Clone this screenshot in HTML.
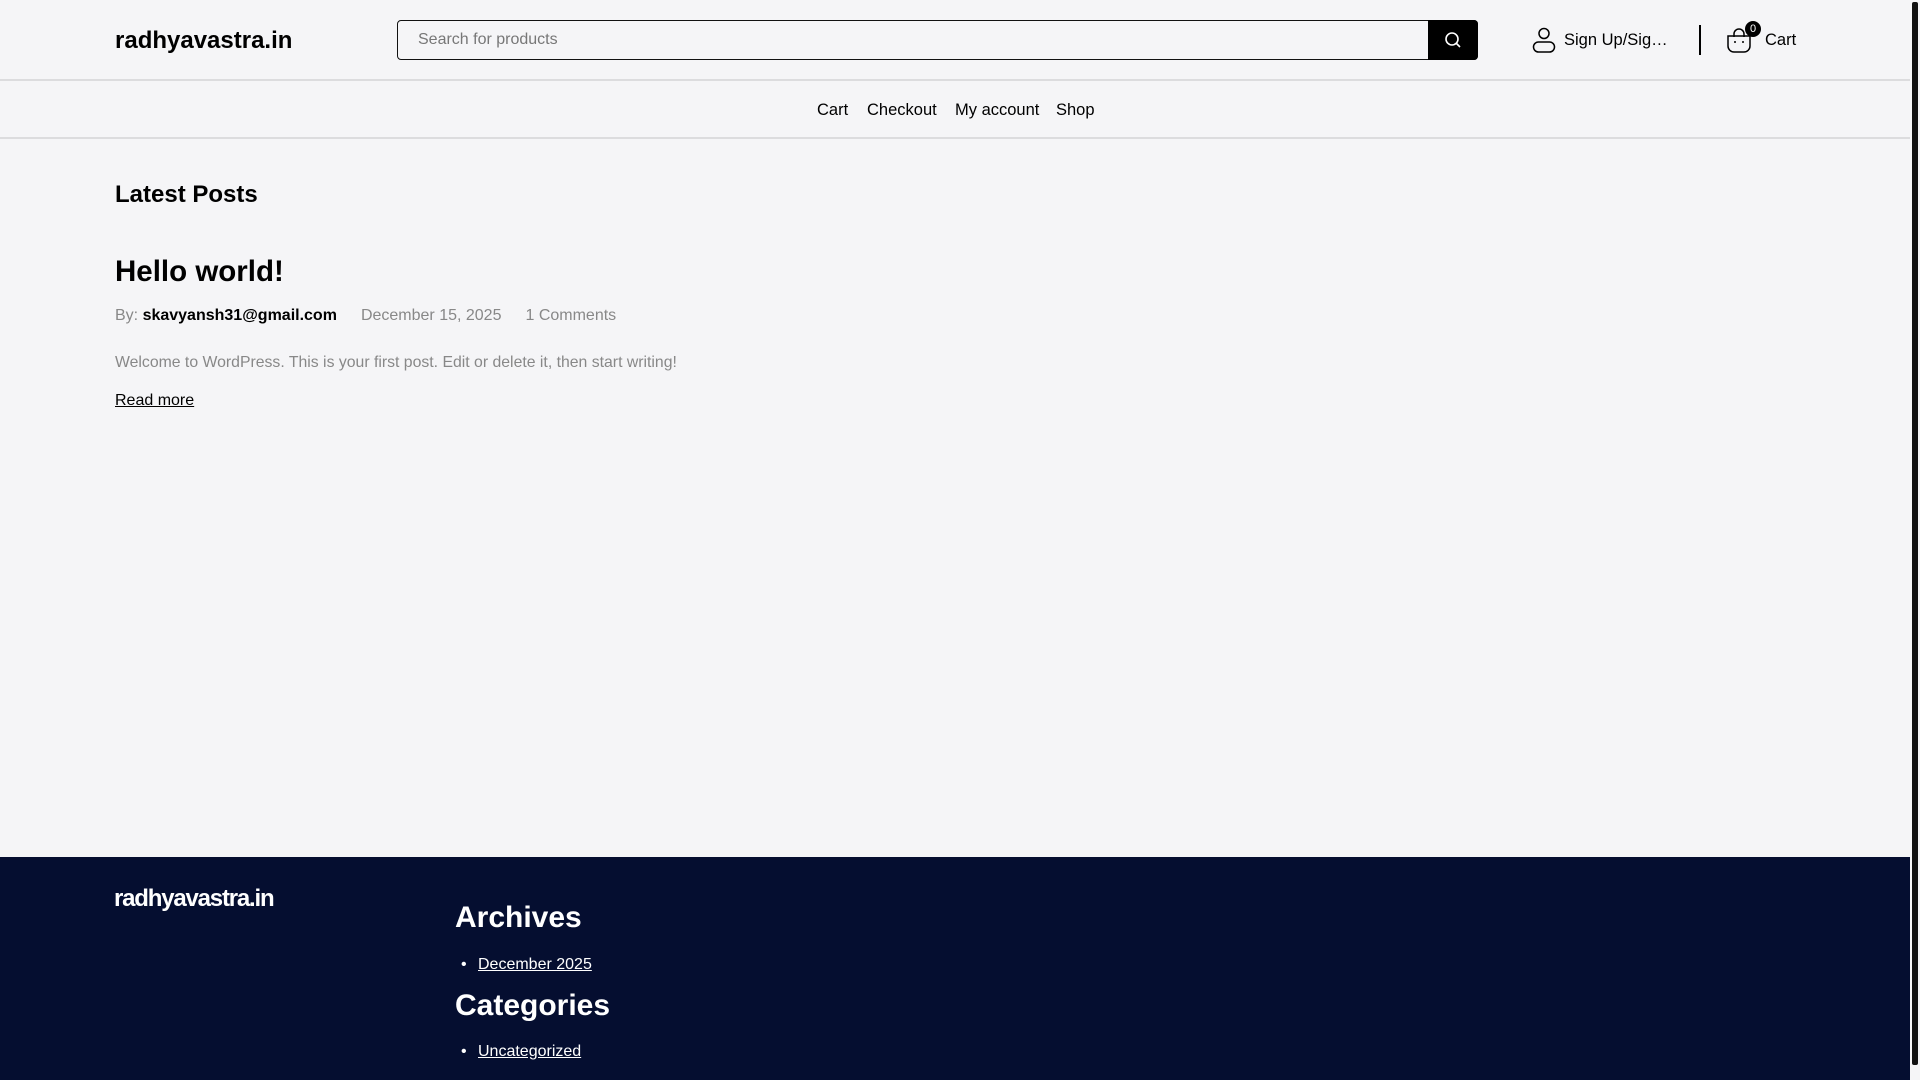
<!DOCTYPE html>
<html><head><meta charset="utf-8"><style>
*{margin:0;padding:0;box-sizing:border-box}
html,body{width:1920px;height:1080px;overflow:hidden;background:#f5f5f7;font-family:"Liberation Sans",Arial,sans-serif;color:#000}
.a{position:absolute;white-space:nowrap}
.line{position:absolute;left:0;width:1910px;height:2px;background:#dcdcde}
a{color:inherit}
</style></head><body>
<div class="a" style="left:115px;top:25px;font-size:24px;font-weight:bold;line-height:32px">radhyavastra.in</div>
<div class="a" style="left:397px;top:20px;width:1081px;height:40px;border:1.5px solid #111;border-radius:4px;background:#f5f5f7"></div>
<div class="a" style="left:418px;top:30px;font-size:16px;color:#777;line-height:20px">Search for products</div>
<div class="a" style="left:1428px;top:20px;width:50px;height:40px;background:#000;border-radius:0 4px 4px 0"></div>
<svg class="a" style="left:1443px;top:30px" width="20" height="20" viewBox="0 0 20 20"><circle cx="9" cy="9" r="6" fill="none" stroke="#fff" stroke-width="1.6"/><path d="M13.5 13.5L17 17" stroke="#fff" stroke-width="1.6"/></svg>
<svg class="a" style="left:1532px;top:26px" width="24" height="28" viewBox="0 0 24 28"><circle cx="12" cy="7.5" r="5" fill="none" stroke="#000" stroke-width="1.5"/><rect x="1.5" y="16" width="21" height="10" rx="5" fill="none" stroke="#000" stroke-width="1.5"/></svg>
<div class="a" style="left:1564px;top:30px;font-size:16.5px;line-height:20px">Sign Up/Sig…</div>
<div class="a" style="left:1699px;top:25px;width:1.5px;height:30px;background:#000"></div>
<svg class="a" style="left:1726px;top:26px" width="26" height="28" viewBox="0 0 26 28"><path d="M8 11V8a5 5 0 0 1 10 0v3" fill="none" stroke="#000" stroke-width="1.5"/><path d="M2 10h22v10a6 6 0 0 1-6 6H8a6 6 0 0 1-6-6z" fill="none" stroke="#000" stroke-width="1.5"/><circle cx="9" cy="16" r="1" fill="#000"/><circle cx="17" cy="16" r="1" fill="#000"/></svg>
<div class="a" style="left:1745px;top:21px;width:16px;height:16px;border-radius:50%;background:#000;color:#fff;font-size:11px;text-align:center;line-height:16px">0</div>
<div class="a" style="left:1765px;top:30px;font-size:16.5px;line-height:20px">Cart</div>
<div class="line" style="top:79px"></div>
<div class="a" style="left:817px;top:100px;font-size:16.5px;line-height:20px">Cart</div>
<div class="a" style="left:867px;top:100px;font-size:16.5px;line-height:20px">Checkout</div>
<div class="a" style="left:955px;top:100px;font-size:16.5px;line-height:20px">My account</div>
<div class="a" style="left:1056px;top:100px;font-size:16.5px;line-height:20px">Shop</div>
<div class="line" style="top:137px"></div>
<div class="a" style="left:115px;top:180px;font-size:24px;font-weight:bold;line-height:30px">Latest Posts</div>
<div class="a" style="left:115px;top:253px;font-size:29.5px;font-weight:bold;line-height:38px">Hello world!</div>
<div class="a" style="left:115px;top:306px;font-size:16px;line-height:20px;color:#888">By: <b style="color:#000">skavyansh31@gmail.com</b><span style="margin-left:24px">December 15, 2025</span><span style="margin-left:24px">1 Comments</span></div>
<div class="a" style="left:115px;top:353px;font-size:15.8px;line-height:20px;color:#888">Welcome to WordPress. This is your first post. Edit or delete it, then start writing!</div>
<div class="a" style="left:115px;top:391px;font-size:16px;line-height:20px"><a href="#">Read more</a></div>
<div class="a" style="left:0;top:857px;width:1910px;height:223px;background:#050e30"></div>
<div class="a" style="left:114px;top:884px;font-size:24px;font-weight:bold;line-height:30px;color:#fff;letter-spacing:-1.2px">radhyavastra.in</div>
<div class="a" style="left:455px;top:900px;font-size:30px;font-weight:bold;line-height:36px;color:#fff">Archives</div>
<div class="a" style="left:478px;top:955px;font-size:16px;line-height:20px;color:#fff"><span style="position:absolute;left:-17px">•</span><a href="#">December 2025</a></div>
<div class="a" style="left:455px;top:988px;font-size:30px;font-weight:bold;line-height:36px;color:#fff">Categories</div>
<div class="a" style="left:478px;top:1042px;font-size:16px;line-height:20px;color:#fff"><span style="position:absolute;left:-17px">•</span><a href="#">Uncategorized</a></div>
<div class="a" style="left:1910px;top:0;width:10px;height:1080px;background:#f5f5f7"></div>
<div class="a" style="left:1912px;top:2px;width:6px;height:1063px;background:#111;border-radius:2px"></div>
</body></html>
